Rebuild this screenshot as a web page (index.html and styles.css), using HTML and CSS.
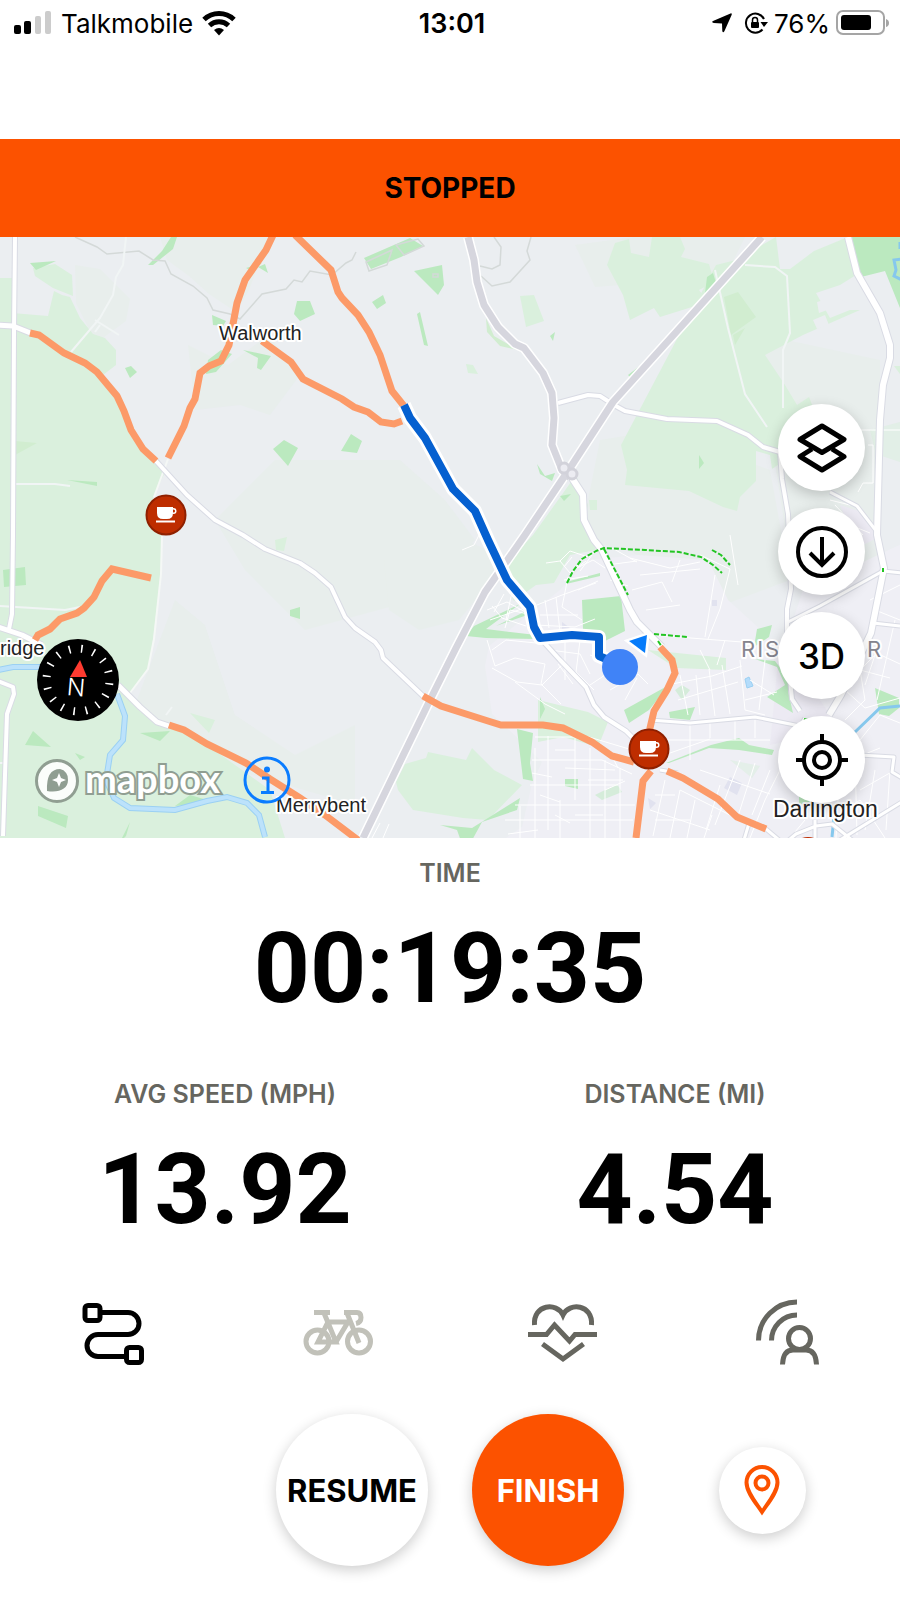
FILE: index.html
```html
<!DOCTYPE html>
<html lang="en">
<head>
<meta charset="utf-8">
<meta name="viewport" content="width=device-width, initial-scale=1">
<title>Ride recording</title>
<link rel="stylesheet" href="styles.css">
</head>
<body>
<header class="status">
  <div class="status-left">
    <svg width="38" height="24" viewBox="0 0 38 24" aria-hidden="true"><rect y="14" width="7" height="9" rx="2"/><rect x="10" y="10" width="7" height="13" rx="2"/><g fill="#ccc"><rect x="21" y="5" width="6" height="18" rx="2"/><rect x="31" width="6" height="23" rx="2"/></g></svg>
    <span>Talkmobile</span>
    <svg width="34" height="26" viewBox="0 0 34 26" aria-hidden="true"><g fill="none" stroke="#000" stroke-width="5"><path d="M2 9.500C10.500 1.500 23.500 1.500 32 9.500"/><path d="M7.500 15.500C13 10.500 21 10.500 26.500 15.500"/></g><path d="M12 20Q17 16 22 20L17 25.500z"/></svg>
  </div>
  <time class="clock">13:01</time>
  <div class="status-right">
    <svg class="locate" width="20" height="20" viewBox="0 0 20 20" aria-hidden="true"><path d="M18.500 .4Q20.300 0 19.600 2L12.500 18Q11 20.500 10.300 18L10 10.500L1.800 10Q-1 9.300 1 8z"/></svg>
    <svg width="24" height="24" viewBox="0 0 24 24" aria-hidden="true"><path d="M18.500 18.500A9.500 9.500 0 1 1 20 8" fill="none" stroke="#000" stroke-width="2"/><path d="M16.500 11H24L20 16z"/><rect x="7" y="11" width="8" height="6" rx="1"/><path d="M8.500 11V9a2.500 2.500 0 0 1 5 0V11" fill="none" stroke="#000" stroke-width="1.500"/></svg>
    <span>76%</span>
    <svg width="54" height="26" viewBox="0 0 54 26" aria-hidden="true"><rect x="1" y="1" width="47" height="23" rx="6" fill="none" stroke="#a5a5a5" stroke-width="2"/><rect x="5" y="5" width="30" height="15" rx="3"/><path d="M50 9q3 1 3 4t-3 4z" fill="#a5a5a5"/></svg>
  </div>
</header>

<h1 class="banner">STOPPED</h1>

<section class="map" aria-label="Route map">
<svg class="map-canvas" viewBox="0 237 900 601" aria-hidden="true">
  <rect y="237" width="900" height="601" fill="#ebeef1"/>
  <!-- soft terrain -->
  <g fill="#e8eeec">
    <path d="M160 237h110l-22 55-12 20-27-18-20-18-22-16zM75 265l25 4 30 30-4 22-30 22-20-40zM188 345l40 20 40-30 32 40-30 40-30-10-45 5zM400 460l45 40 30 40-60 60-110 30-60-60-30-50 60-60zM175 600l30 25 30 90 60 40 60-30v80l-170-50-50-50zM600 440l60-10 110 40 20 110-80 30-80-60-50-10zM740 330l140 30v230l-90-30-20-130z"/>
    <path d="M384 560l60-30 65 30-50 60-40 10-30-20zM575 245l60-8h110l-20 40-130 10z"/>
  </g>
  <!-- built-up area -->
  <path d="M560 590l28-30 50-5 70 5 20 40 55 50 20-60 107-50v338H470l5-16 25-20 22-15 10-43 10-22-20-20-30-28-7-48 4-20z" fill="#efeff5"/>
  <path d="M840 505l25 8 12 25-20 10zM780 640l60 90-70 15z" fill="#eceaf3"/>
  <!-- fields -->
  <g fill="#daf0dd">
    <path d="M0 278h12v35l36 3 6-25 8 4 8 2 10 21 13 16 12 4 11 12v15l-13 10 17 25 20 40 17 20 8 12-12 26 9 37-2 45-7 60-5 30-18 23 20 27 50 20 70 50 15 48H0z"/>
    <path d="M33 268l22-4 17 11 1 21-20-8-18-12z"/>
    <path d="M607 265l8-22 14-4 2 14 18 4 3-20h28l5 12-4 8 28 7 5 18-15 8 9 12-48 15-6-9-24 12-7-25zM716 265l20-5 40-23 4 32 10 0 24-18 34-14 8 38-16 10-24 8 14 25 20-8 10 0-57 25-38 20 20 30 12 20 12-8 4 10-2 12 15-6 4 16-58 40-2-14-14-4v30l-16 16-3 14-14-4-34-16-64-6 2-15-6-25z"/>
    <path d="M533 535l43-60 12 30-4 17 12 28-26 5-16 28-18 2-22 16-15-30zM520 296l14-1 10 26-18 6zM466 364l7 1 5 9-10-1zM589 500h8v10h-7zM428 752l38 8 6-12 22 22 28 15-34 35-25-2-50-8-15-20-2-8 9-18 21-6zM648 650l78 8v12l-50-2zM538 700l50 12 20 10-10 25-35-10-25 5z"/>
    <path d="M190 713l25 7-6 13zM275 540l12-3-3 14-8-1zM894 366h6v8z"/>
    <path d="M870 430l30-8v40l-24-8zM730 760l30 6-8 12z" opacity=".5"/>
  </g>
  <path d="M817 302l18-5 12 6-28 10zM813 320l12-5 4 10-12 4z" fill="#ebeef1"/>
  <path d="M724 297l14-5 18 25-25 18zM733 335l12-7-10 17zM15 441l22 2-22 12zM486 318l8 18 24 14-18-4-13-14z" fill="#d1edd0"/>
  <!-- woods -->
  <g fill="#bbe9bf">
    <path d="M30 263l26-2-20 9zM171 237h6l-4 12-20 16-5 0 14-14zM246 268l16-5-10 8zM258 267l7-3 3 9zM212 315l14 6-3 5-10-1zM208 360l13-10 11 4-16 18-10 2zM243 350l28 6-10 14-4-2 1-10zM125 368l6-2 6 6-7 6zM273 449l11-9 14 8-10 18zM67 480l30 2v4zM341 451l10-17 11 7-5 12zM364 258l46-20 13 8-22 11-30 12zM414 271l28-6 2 20-6 10zM372 302l11-7 3 8-9 6zM417 314l3-2 8 34-4-1zM297 301h13l5 13-15 7-6-7zM550 336l5-4-2 9zM628 375l13-10-10 13zM699 455l5 8-5 6z"/>
    <path d="M705 293l2-16 6-4 3 10-8 10zM852 237h48v71l-15-37-20 5-8 2zM537 464l8 12 10-3-3 8-12-7zM560 496l11-2-7 7zM3 570l22-3 1 18-22 2zM25 745l8-14 18 16zM75 753l10 4-5 3zM38 806l30 10-2 12-28-12zM120 842l10-20-4 14zM140 733l30-2-10 10zM175 806l15-11 24 7zM290 610l10-3v12l-10-3zM466 636l8-10 46-22-34 25 50 6v4l-50-1zM496 626l40-20-3 7zM566 582l34-9v3l-34 8zM582 600l39-4 4 35-20 10-22-12zM517 729l16 4-3 30 3 18-10-2zM440 825l32 3 48-30-3 12-35 12-12 22h-8l-5-14zM540 697l5 12-5 10zM565 779h13v10l-13-3zM666 763l45-18 28-7 10 7 25 5-2 5-33-5-30-2-40 15zM624 710l45-25-20 25-20 13zM669 712l26-5-5 13-20-2zM757 629l15-4-3 12-15 10zM767 697l18-12-8-18-22-8 20 2 15 20-2 10 5 22zM875 688l24 10v10l-10 8-10-2zM799 794h20v10h-20z"/>
    <path d="M595 795l22-11 5 8-20 8zM675 690l7-5 8 5-8 10z" opacity=".5"/>
  </g>
  <path d="M730 777l12 6-5 12-13-7zM562 622l8 6-8 5zM648 798l8 5-6 6zM712 600h5v6h-5z" fill="#e1e2ef"/>
  <!-- water -->
  <g fill="none" stroke="#9bd0f3">
    <path d="M-2 670l15-3h35M117 694l8 22-2 24-13 15-4 25 8 18 16 10 45 2 32-9 20-4 20 6 12 12 6 22" stroke-width="6"/>
    <path d="M-2 670l15-3h35M117 694l8 22-2 24-13 15-4 25 8 18 16 10 45 2 32-9 20-4 20 6 12 12 6 22" stroke="#bce2fb" stroke-width="4"/>
    <path d="M900 242v7M901 259l-7 1 2 10-2 6 8 4M855 732l25-24 20-2M832 837l2-20" stroke-width="3" stroke="#86c8ed"/>
    <path d="M745 679l4-2 4 9-6 2z" fill="#b4dcfb" stroke-width="1"/>
  </g>
  <!-- administrative boundaries -->
  <g fill="none" stroke="#d4d9d8" stroke-width="1.500">
    <path d="M75 237l22 10 10 7 32-3 14 9 12 1 6 13 22 12 14 12 6 12 17 4 10 5 22-25 24-5 8-9 8 2 8-11 22 4 14-12 6-3 4-8M494 237l7 10-1 18-8 4-12-3M531 237l-4 14 3 9-20 22-18 4-11-10"/>
    <path d="M366 262l26-12-5 15-18 6zM396 245l22-6 6 7-20 9zM433 274h5v3h-5z"/>
  </g>
  <!-- residential streets -->
  <g fill="none" stroke="#fff" stroke-width="1">
    <path d="M487 610l20-8 22 12M492 606l10 12 24 8M504 594l-10 18M512 592l-6 28M490 620l40-14M505 628l5-18 22 5M537 605l25-10 34-12M545 600l4 28M556 597l4 34M568 577l-6 30 20 13M546 563l14-2 10-10 18 6 12-8M560 561l10 12 16-12M573 570l20-10 12 8M578 590l20-9M540 615h38M535 625l40 2 20-8M564 580l24-4M572 557l-8 10M582 558l-10 16M592 555l-12 16M462 550l12-5 5-10"/>
    <path d="M487 640l8 26 20-8 30 6M492 650l14-10 40 4M492 668l25 14 25 3 20-20M515 682l30 22 20 10M545 664l-4 20 20 20M550 650l30 4 10 20M565 640v40M580 640l-4 32 18 18M590 655l25 8M605 675l-18 12M610 690l28-16 10 10M625 700l12-22M558 664l15 20"/>
    <path d="M535 737h54l40 12M532 760h70l30 14M530 785h88M515 805h120M505 820h128M520 838v-32M535 838v-90M548 830v-94M560 838v-38M575 800v-62M590 838v-90M605 838v-78M620 838v-70M532 773l20 4M565 768l50 2M575 815h28M610 752l8 16M540 795l20 7M508 834l30-4M555 815l15 8M605 790l20-9M555 750h20M588 780h35M372 838l8-15M383 838l6-14"/>
    <path d="M630 558l40 10 30-6M640 575l60-6M632 590l30-8 10 20M646 610l34-5M652 635l90 7M700 555l30 14-10 40-12 30M730 535l8 50M607 565l30-4M680 560l-8 22M715 575l-10 62M610 580l18 6M612 548l25 14"/>
    <path d="M672 684l40-8 30-10M678 700l60-18M688 715l-8-40M700 715l-4-40M715 716l-6-47M730 714l-8-49M740 660l5 50 20 5M745 700l32-8M660 740h110M670 753l40-14M690 760v-35M710 738v-15M735 740v-20M755 738v-18M750 680l24 15M765 660l-6 50M700 650l10 20M725 640l-8 25M720 785l-14 45M740 760l-25 65M755 763l-16 50M770 770l-18 45M700 770l70 24M680 790l60 30M650 810l60 20M665 780l-12 56M680 790l-10 48M695 800l-8 38M712 815l-8 23M655 795h20M655 820h35"/>
    <path d="M795 640l18-18M797 665l50-40M800 690l40-35M845 690l20 18 35-10M845 720l20-20-5-30 20-20M860 740l20-25 20 8M850 760l30-12M860 790l35-20M830 820l30-20 25 38M870 600l30-15M875 610l25 10M870 650l30 14M860 670l30 8M880 640l-15 45M895 620l-18 80M840 760l-4 78M855 755l2 80M805 820l-15 18M875 770l-10 60M890 770l-4 60M780 770l-15 30-15 38M800 560l10 20M850 505l-20-5M850 525l20 8M835 505l28 30M847 430h53M868 445h5v38h-10l-5 9"/>
    <path d="M0 606l65 4 15-3M15 484h40l15 2M0 763h8M126 237l-3 28-7 12-3 18-13 23-29 34M95 320l8 5 16 10M100 325l-5 7M715 270l13 58 17 66 22 33M745 265l30 2 12 9 3 57-7 17v58M166 715l6-8" stroke="#f1f5f5" stroke-width="2"/>
    <path d="M168 459l-14 38M162 536l-1 38-7 65-6 30-18 24" stroke="#f5f8f6" stroke-width="2"/>
  </g>
  <!-- road casings, then surfaces -->
  <g fill="none" stroke-linejoin="round">
    <g stroke="#d9dbe4">
      <path d="M15 237l-1 95-1 203-1 79-3 15" stroke-width="6"/>
      <path d="M-2 325l15 1 20 8M-2 627l24 8 20 10M118 685l22 22 17 15 12 4" stroke-width="7"/>
      <path d="M-2 681l15 6 1 7-7 20-4 122M156 461l31 34 28 25 28 15 22 14 35 14 15 10 16 14 14 30 10 11 20 14 6 8 2 8 40 38M540 638l20 22 26 27 8 18 10 12 22 14 10 10M558 403l30-8 12 1 14 9 11 6 42 8 50 2 31 14 15 12 17 5 2 27 6 35 3 75-4 20v40l5 50 8 12" stroke-width="6"/>
      <path d="M572 478l11 17 1 25 10 20 8 10 28 60 7 12 18 18 7 7M848 237l9 36 23 40 10 32v13l-7 27-3 35-3 115 7 33-13 65-30 62-12 20" stroke-width="8"/>
      <path d="M830 492l27 14 20 26M788 622l32-16 63-35 20 2M873 623l27 3M650 720l40 3 65-6 45 9 5-8M660 770l18 3M766 829l18 15 12-10 20-8 16-2 20 16M815 820v18M840 840l65-40M790 751l104 6-2 15 10 6M750 820l-6 20" stroke-width="5"/>
    </g>
    <g stroke="#fff">
      <path d="M15 237l-1 95-1 203-1 79-3 15" stroke-width="4"/>
      <path d="M-2 325l15 1 20 8M-2 627l24 8 20 10M118 685l22 22 17 15 12 4" stroke-width="5"/>
      <path d="M-2 681l15 6 1 7-7 20-4 122M156 461l31 34 28 25 28 15 22 14 35 14 15 10 16 14 14 30 10 11 20 14 6 8 2 8 40 38M540 638l20 22 26 27 8 18 10 12 22 14 10 10M558 403l30-8 12 1 14 9 11 6 42 8 50 2 31 14 15 12 17 5 2 27 6 35 3 75-4 20v40l5 50 8 12" stroke-width="4"/>
      <path d="M572 478l11 17 1 25 10 20 8 10 28 60 7 12 18 18 7 7M848 237l9 36 23 40 10 32v13l-7 27-3 35-3 115 7 33-13 65-30 62-12 20" stroke-width="6"/>
      <path d="M830 492l27 14 20 26M788 622l32-16 63-35 20 2M873 623l27 3M650 720l40 3 65-6 45 9 5-8M660 770l18 3M766 829l18 15 12-10 20-8 16-2 20 16M815 820v18M840 840l65-40M790 751l104 6-2 15 10 6M750 820l-6 20" stroke-width="3"/>
      <path d="M762 237L613 402l-13 20-28 43-47 70-28 40-12 17-29 56-26 52-67 138M468 237l6 23 3 22 7 23 14 22 17 17 9 4 19 25 9 20 2 25-2 27 10 25 8 8" stroke-width="10"/>
    </g>
    <path d="M762 237L613 402l-13 20-28 43-47 70-28 40-12 17-29 56-26 52-67 138M468 237l6 23 3 22 7 23 14 22 17 17 9 4 19 25 9 20 2 25-2 27 10 25 8 8" stroke="#d6d6de" stroke-width="7"/>
    <g stroke="#d2d2da" stroke-width="3" fill="#ececf2"><circle cx="564" cy="468" r="5"/><circle cx="572" cy="474" r="5"/></g>
    <path d="M567 583l6-12 9-12 14-8 8-3 41 2 34 2 22 5 12 8 9 8M712 550l9 5 9 10M604 549l24 46M654 634l33 3M658 641l4 6M883 568v4M804 719l4 1" stroke="#23c523" stroke-width="2" stroke-dasharray="5 2"/>
    <!-- suggested roads -->
    <g stroke="#fc9a68" stroke-width="7" stroke-linejoin="miter">
      <path d="M30 333l9 2 25 18 21 10 12 9 20 24 7 15 7 19 12 19 13 12M274 233l-8 17-21 30-8 23-8 42-8 16-12 5-9 7-5 26-5 9-6 18-16 32M262 341l29 21 12 17 39 20 12 8 14 5 13 10 13 2 8-3M295 235l36 35 7 22 4 6 16 17 11 17 11 23 12 36 12 15"/>
      <path d="M35 640l3-5 12-6 10-10 17-6 7-5 10-11 8-16 10-12 39 9M169 725l15 5 23 14 39 19 24 16 30 19 25 17 33 25M423 696l18 10 47 15 13 4h42l20 3 29 14 20 14 22 6M660 647l12 13 3 13-8 17-13 21-4 17-1 10M667 771l16 7 35 21 19 18 29 12M651 771l-8 10-7 57"/>
    </g>
    <!-- ridden track -->
    <path d="M404 405l6 13 15 20 28 51 22 22 13 29 19 40 23 27 4 20 6 11 32-3 27 2v19l12 5" stroke="#fff" stroke-width="14"/>
    <path d="M404 405l6 13 15 20 28 51 22 22 13 29 19 40 23 27 4 20 6 11 32-3 27 2v19l12 5" stroke="#0560d0" stroke-width="8"/>
  </g>
  <path d="M629 641l18-6-2 18z" fill="#067bfa" stroke="#fff" stroke-width="5" paint-order="stroke"/>
  <circle cx="620" cy="667" r="18" fill="#4083f7"/>
  <g id="cafe">
    <circle cx="166" cy="515" r="19.500" fill="#be2d00" stroke="#8f2000" stroke-width="2"/>
    <path d="M157 507h16v6q0 6-6 6h-4q-6 0-6-6z" fill="#fff"/><circle cx="173.500" cy="511" r="2.300" fill="none" stroke="#fff" stroke-width="1.500"/><path d="M156 521.500h19" stroke="#fff" stroke-width="2"/>
  </g>
  <use href="#cafe" x="483" y="234"/>
  <circle cx="808" cy="855" r="18" fill="#be2d00"/>
  <g class="place">
    <text x="219" y="340">Walworth</text>
    <text x="0" y="655">ridge</text>
    <text x="276" y="812">Merrybent</text>
  </g>
  <text class="city" x="773" y="817">Darlington</text>
  <g class="ward">
    <text x="741" y="657">RIS</text>
    <text x="867" y="657">R</text>
  </g>
</svg>
<div class="compass">
  <svg viewBox="0 0 82 82" aria-hidden="true"><circle cx="41" cy="41" r="41"/><circle cx="41" cy="41" r="31.500" fill="none" stroke="#fff" stroke-width="8" pathLength="128" stroke-dasharray="1 7" stroke-dashoffset="-2"/><path d="M43 21l7 17H33z" fill="#ff3b30"/></svg>
  <span class="north">N</span>
</div>
<div class="attribution">
  <svg width="44" height="44" viewBox="0 0 44 44" aria-hidden="true"><circle cx="22" cy="22" r="20.500" fill="#fbfdfb" stroke="#909e92" stroke-width="3"/><path d="M12 32q-1-22 13-22a10 10 0 0 1 8 11c0 9-9 13-21 11z" fill="#909e92"/><path d="M24 14l2 5 5 2-5 2-2 5-2-5-5-2 5-2z" fill="#fff"/></svg>
  <span class="brand">mapbox</span>
</div>
<button class="info" type="button" aria-label="Map information"><svg width="48" height="48" viewBox="0 0 48 48" fill="none" stroke="#0a7cff" stroke-width="3" aria-hidden="true"><circle cx="24" cy="24" r="22"/><circle cx="24" cy="13.500" r="3" fill="#0a7cff" stroke="none"/><path d="M19 22h6v14M18 36.500h13"/></svg></button>
<div class="map-tools">
  <button class="tool" type="button" aria-label="Map layers"><svg width="54" height="54" viewBox="0 0 54 54" fill="none" stroke="#000" stroke-width="5" stroke-linejoin="round" aria-hidden="true"><path d="M27 5L49 18.500L27 31.500L5 18.500z"/><path d="M17 28L5 35.500L27 49L49 35.500L37 28"/></svg></button>
  <button class="tool" type="button" aria-label="Download map"><svg width="54" height="54" viewBox="0 0 54 54" fill="none" stroke="#000" stroke-width="4" aria-hidden="true"><circle cx="27" cy="27" r="24"/><path d="M27 12V40M15 28L27 40L39 28"/></svg></button>
  <button class="tool" type="button">3D</button>
  <button class="tool" type="button" aria-label="Centre on me"><svg width="54" height="54" viewBox="0 0 54 54" fill="none" stroke="#000" stroke-width="4" aria-hidden="true"><circle cx="27" cy="27" r="18"/><circle cx="27" cy="27" r="8"/><path d="M27 1V9M27 45V53M1 27H9M45 27H53"/></svg></button>
</div>
</section>

<main class="stats">
  <section class="stat stat-wide"><h2 class="label">TIME</h2><p class="value">00:19:35</p></section>
  <section class="stat"><h2 class="label">AVG SPEED (MPH)</h2><p class="value">13.92</p></section>
  <section class="stat"><h2 class="label">DISTANCE (MI)</h2><p class="value">4.54</p></section>
</main>

<nav class="modes">
  <button class="mode" type="button" aria-label="Routes"><svg width="80" height="80" viewBox="0 0 80 80" fill="none" stroke="#000" stroke-width="5" aria-hidden="true"><rect x="12" y="12.500" width="15" height="15" rx="3"/><path d="M29 19.500H55a11 11 0 0 1 0 22H25a11 11 0 0 0 0 22H53"/><rect x="53.500" y="54.500" width="15" height="15" rx="3"/></svg></button>
  <button class="mode" type="button" aria-label="Bike"><svg width="80" height="80" viewBox="0 0 80 80" fill="none" stroke="#c1c1b9" stroke-width="5" aria-hidden="true"><circle cx="19.500" cy="48.500" r="11.500"/><circle cx="61" cy="48.500" r="11.500"/><path d="M16 19.500H32M26 20L38 49H20L30 29H50L38 49M46 19.500H59q4 0 4 5 0 5-5 6M49 20L61 50"/></svg></button>
  <button class="mode" type="button" aria-label="Heart rate"><svg width="80" height="80" viewBox="0 0 80 80" fill="none" stroke="#66665f" stroke-width="5" aria-hidden="true"><path d="M11.500 32C10 11 34 9 40 22C46 9 70 11 68.500 32M5 41.500H23.500L31.500 32L46.500 48L52 41.500H74M19.500 51L40 66L60.500 51"/></svg></button>
  <button class="mode" type="button" aria-label="Beacon"><svg width="80" height="80" viewBox="0 0 80 80" fill="none" stroke="#66665f" stroke-width="5" aria-hidden="true"><path d="M10.500 47.500A38.500 38.500 0 0 1 49 9M23.500 47.500A25.500 25.500 0 0 1 49 22M34.500 71.500C35 61 39 57 45 57H58C64 57 68 61 68.500 71.500"/><circle cx="51.500" cy="45.500" r="11"/></svg></button>
</nav>

<div class="actions">
  <button class="action resume" type="button">RESUME</button>
  <button class="action finish" type="button">FINISH</button>
  <button class="tool pin" type="button" aria-label="Mark location"><svg width="40" height="52" viewBox="0 0 40 52" fill="none" stroke="#fc5200" stroke-width="4" aria-hidden="true"><path d="M20 48C14 39 4.500 28 4.500 18.500a15.500 15.500 0 0 1 31 0C35.500 28 26 39 20 48z"/><circle cx="20" cy="19" r="6.500"/></svg></button>
</div>
</body>
</html>
```
FILE: styles.css
```css
* { box-sizing: border-box; }
body { margin: 0; background: #fff; color: #000; font-family: Inter, "Liberation Sans", sans-serif; }
button { border: 0; padding: 0; background: none; color: inherit; font: inherit; cursor: pointer; }
h1, h2, p { margin: 0; }
svg { display: block; flex: none; }

.status { display: grid; grid-template-columns: 1fr auto 1fr; align-items: center; height: 46px; margin-bottom: 93px; padding: 0 10px 0 14px; font-size: 26px; }
.status-left, .status-right { display: flex; align-items: center; gap: 9px; }
.status-right { justify-content: flex-end; gap: 6px; }
.locate { margin-right: 6px; }
.clock { font-size: 27px; font-weight: 600; }

.banner { height: 98px; background: #fc5200; font-size: 28px; font-weight: 700; line-height: 98px; text-align: center; }

.map { position: relative; overflow: hidden; }
.map-canvas { width: 100%; height: auto; }
.place, .city { font-family: "Liberation Sans", sans-serif; }
.place, .city, .ward { fill: #222; stroke: #fff; stroke-width: 4px; stroke-linejoin: round; paint-order: stroke; font-size: 20px; }
.city { font-size: 23px; }
.ward { fill: #85858f; font-size: 22px; letter-spacing: 2px; }

.compass { position: absolute; left: 37px; bottom: 117px; width: 82px; height: 82px; }
.north { position: absolute; inset: 34px 0 auto; padding-right: 4px; color: #fff; font-size: 24px; font-weight: 300; text-align: center; transform: rotate(5deg); }
.attribution { position: absolute; left: 35px; bottom: 35px; display: flex; align-items: center; gap: 6px; }
.brand { padding-bottom: 6px; color: #fff; font-family: Lato, sans-serif; font-size: 38px; font-weight: 700; line-height: 38px; -webkit-text-stroke: 4px #909e92; paint-order: stroke fill; }
.info { position: absolute; left: 243px; bottom: 34px; }
.map-tools { position: absolute; right: 35px; bottom: 35px; display: grid; gap: 17px; }
.tool { display: grid; place-items: center; width: 87px; height: 87px; border-radius: 50%; background: #fff; box-shadow: 0 4px 14px #0003; font-size: 35px; font-weight: 500; }

.stats { display: grid; grid-template-columns: 1fr 1fr; }
.stat { padding-top: 19px; text-align: center; }
.stat-wide { grid-column: 1 / -1; }
.stat .label { color: #66665f; font-size: 25px; font-weight: 600; line-height: 32px; }
.value { padding: 22px 0 32px; font-family: Roboto, sans-serif; font-size: 98px; font-weight: 700; line-height: 116px; }

.modes { display: grid; grid-template-columns: repeat(4, 1fr); }
.mode { display: grid; place-items: center; height: 106px; }

.actions { display: grid; grid-template-columns: 1fr auto auto 1fr; align-items: center; gap: 44px; padding: 28px 0 30px; }
.action { width: 152px; height: 152px; border-radius: 50%; box-shadow: 0 4px 14px #0003; font-size: 31px; font-weight: 700; }
.resume { grid-column: 2; }
.finish { background: #fc5200; color: #fff; }
.pin { justify-self: center; margin-right: 44px; }
```
